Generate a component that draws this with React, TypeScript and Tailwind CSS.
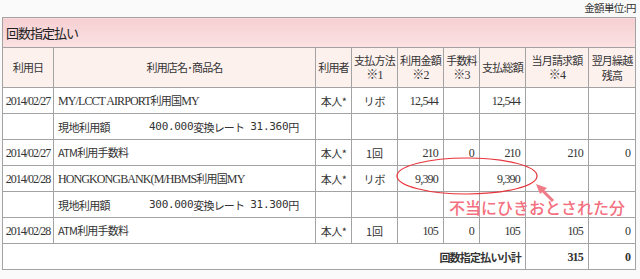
import React from "react";

const jp = "font-['Noto_Sans_CJK_JP',sans-serif]";
const serif = "font-['Liberation_Serif','Noto_Sans_CJK_JP',serif]";

type Row =
  | {
      kind: "item";
      date: string;
      name: string;
      user: string;
      method: string;
      amount?: string;
      fee?: string;
      total?: string;
      bill?: string;
      carry?: string;
    }
  | { kind: "local"; yen: string; rate: string };

const rows: Row[] = [
  { kind: "item", date: "2014/02/27", name: "MY/LCCT AIRPORT利用国MY", user: "本人*", method: "リボ", amount: "12,544", total: "12,544" },
  { kind: "local", yen: "400.000", rate: "31.360" },
  { kind: "item", date: "2014/02/27", name: "ATM利用手数料", user: "本人*", method: "1回", amount: "210", fee: "0", total: "210", bill: "210", carry: "0" },
  { kind: "item", date: "2014/02/28", name: "HONGKONGBANK(M/HBMS利用国MY", user: "本人*", method: "リボ", amount: "9,390", total: "9,390" },
  { kind: "local", yen: "300.000", rate: "31.300" },
  { kind: "item", date: "2014/02/28", name: "ATM利用手数料", user: "本人*", method: "1回", amount: "105", fee: "0", total: "105", bill: "105", carry: "0" },
];

const td =
  "border border-[#a3a3a3] h-[26px] p-0 text-[11px] leading-[14px] text-[#333] bg-white whitespace-nowrap overflow-hidden";
const num = `${td} ${serif} text-[12px] tracking-[-0.8px] text-right pr-[5px]`;

function Name({ text }: { text: string }) {
  // latin parts serif, japanese in gothic
  const parts = text.split(/(利用国|利用手数料|ATM)/);
  return (
    <>
      {parts.map((p, i) =>
        p === "利用国" || p === "利用手数料" || p === "ATM" ? (
          <span key={i} className={`${jp} tracking-[-0.8px]`}>
            {p}
          </span>
        ) : (
          <span key={i} className={`${serif} text-[12px] tracking-[-0.9px]`}>
            {p}
          </span>
        )
      )}
    </>
  );
}

export default function App() {
  return (
    <div className={`relative w-[640px] h-[279px] bg-[#fafafa] overflow-hidden ${jp}`}>
      <div className="h-[17px] flex justify-end items-start pr-[4px] pt-[1px] text-[10.5px] leading-[14px] tracking-[-0.6px] text-[#333]">
        金額単位:円
      </div>
      <table className="ml-[2px] w-[633px] border-collapse table-fixed">
        <colgroup>
          <col className="w-[51px]" />
          <col className="w-[262px]" />
          <col className="w-[36px]" />
          <col className="w-[46px]" />
          <col className="w-[46px]" />
          <col className="w-[36px]" />
          <col className="w-[46px]" />
          <col className="w-[63px]" />
          <col className="w-[47px]" />
        </colgroup>
        <thead>
          <tr>
            <th
              colSpan={9}
              className="border border-[#a3a3a3] h-[30px] p-0 pl-[3px] text-left font-normal text-[13px] tracking-[-1px] text-[#222] bg-gradient-to-b from-[#f6cfd2] to-[#fbe2e2]"
            >
              回数指定払い
            </th>
          </tr>
          <tr className="bg-[#fdf1ee] text-[11px] leading-[15px] text-[#333] font-normal">
            {[
              ["利用日"],
              ["利用店名･商品名"],
              ["利用者"],
              ["支払方法", "※1"],
              ["利用金額", "※2"],
              ["手数料", "※3"],
              ["支払総額"],
              ["当月請求額", "※4"],
              ["翌月繰越", "残高"],
            ].map((h, i) => (
              <th
                key={i}
                className="border border-[#a3a3a3] h-[40px] p-0 font-normal whitespace-nowrap tracking-[-0.8px] overflow-hidden"
              >
                <div>{h[0]}</div>
                {h[1] && (
                  <div className={h[1].startsWith("※") ? `${serif} text-[12px]` : ""}>{h[1]}</div>
                )}
              </th>
            ))}
          </tr>
        </thead>
        <tbody>
          {rows.map((r, i) =>
            r.kind === "item" ? (
              <tr key={i}>
                <td className={`${td} ${serif} text-[12px] tracking-[-1px] text-center`}>{r.date}</td>
                <td className={`${td} pl-[4px]`}>
                  <Name text={r.name} />
                </td>
                <td className={`${td} text-center tracking-[-0.5px]`}>{r.user}</td>
                <td className={`${td} text-center`}>{r.method}</td>
                <td className={num}>{r.amount}</td>
                <td className={num}>{r.fee}</td>
                <td className={num}>{r.total}</td>
                <td className={num}>{r.bill}</td>
                <td className={num}>{r.carry}</td>
              </tr>
            ) : (
              <tr key={i}>
                <td className={td}></td>
                <td className={`${td} pl-[4px]`}>
                  <div className="flex items-center text-[11px]">
                    <span className="w-[91px] tracking-[-0.6px]">現地利用額</span>
                    <span className="font-['DejaVu_Sans_Mono',monospace] text-[11px] tracking-[-0.3px]">{r.yen}</span>
                    <span className="w-[55px] tracking-[-0.8px]">変換レート</span>
                    <span className="font-['DejaVu_Sans_Mono',monospace] text-[11px] tracking-[-0.3px] ml-[2px]">{r.rate}</span>
                    <span>円</span>
                  </div>
                </td>
                <td className={td}></td>
                <td className={td}></td>
                <td className={td}></td>
                <td className={td}></td>
                <td className={td}></td>
                <td className={td}></td>
                <td className={td}></td>
              </tr>
            )
          )}
          <tr>
            <td colSpan={7} className={`${td} bg-[#efefef] text-right pr-[4px] font-bold tracking-[-0.8px]`}>
              回数指定払い小計
            </td>
            <td className={`${num} font-bold`}>315</td>
            <td className={`${num} font-bold`}>0</td>
          </tr>
        </tbody>
      </table>

      <svg className="absolute left-0 top-0 pointer-events-none" width="640" height="279">
        <ellipse cx="467" cy="176" rx="70" ry="18" fill="none" stroke="#e8343c" strokeWidth="1.2" />
        <line x1="553" y1="201" x2="541" y2="189" stroke="#f07a86" strokeWidth="3" />
        <polygon points="536,184 547,188 540,194" fill="#f07a86" />
      </svg>
      <div className="absolute left-[449px] top-[197px] text-[16px] leading-[20px] text-[#f4707e] font-medium">
        不当にひきおとされた分
      </div>
    </div>
  );
}
